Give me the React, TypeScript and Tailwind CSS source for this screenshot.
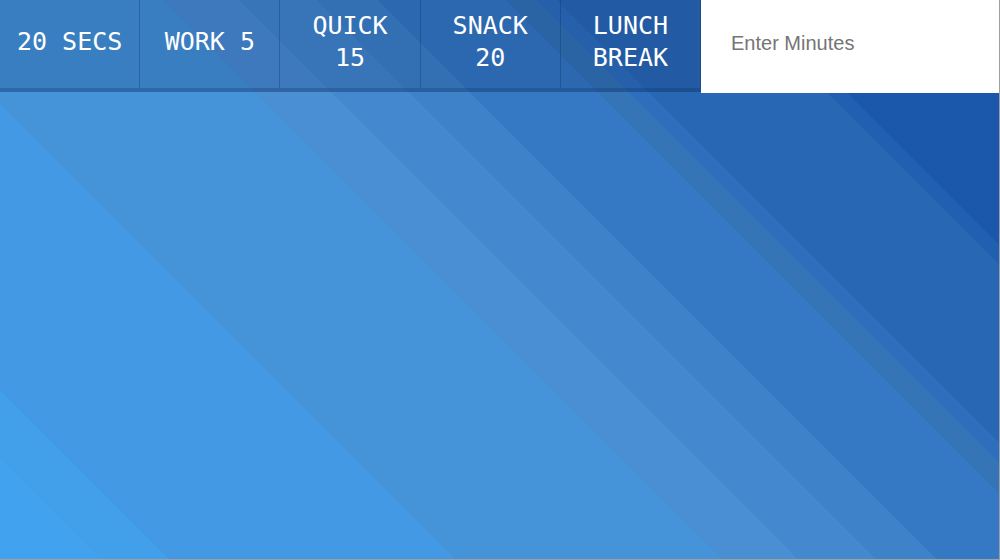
import React from 'react';

const presets = ["20 Secs", "Work 5", "Quick 15", "Snack 20", "Lunch Break"];

export default function App() {
  return (
    <div className="w-[1000px] h-[560px] border-r border-b border-[#9f9f9f] bg-[linear-gradient(45deg,#41a2ef_0%,#41a2ef_6.4%,#42a0eb_6.4%,#42a0eb_10.8%,#4399e4_10.8%,#4399e4_29.2%,#4594d9_29.2%,#4594d9_46.3%,#4a8ed4_46.3%,#4a8ed4_51.2%,#4488cf_51.2%,#4488cf_56.2%,#3e82c9_56.2%,#3e82c9_60.1%,#3578c3_60.1%,#3578c3_68.3%,#3474b7_68.3%,#3474b7_70.3%,#2e6fbd_70.3%,#2e6fbd_71.6%,#2867b4_71.6%,#2867b4_83%,#215fb0_83%,#215fb0_84.3%,#1b57aa_84.3%,#1b57aa_100%)]">
      <header className="flex items-start">
        <nav className="flex w-[701px] h-[92px] bg-[#0b2a5e]/20 border-b-4 border-[#0b2a5e]/25">
          {presets.map((label) => (
            <button
              key={label}
              className="flex-1 h-full flex items-center justify-center px-3 pb-1 border-r border-[#0b2a5e]/30 text-white uppercase text-[25px] leading-[32px] font-['DejaVu_Sans_Mono',monospace]"
            >
              {label}
            </button>
          ))}
        </nav>
        <input
          type="text"
          placeholder="Enter Minutes"
          className="w-[298px] h-[93px] bg-white pl-[30px] pb-[6px] text-[20px] text-[#333] placeholder:text-[#757575] outline-none font-['Liberation_Sans',Arial,sans-serif]"
        />
      </header>
    </div>
  );
}
